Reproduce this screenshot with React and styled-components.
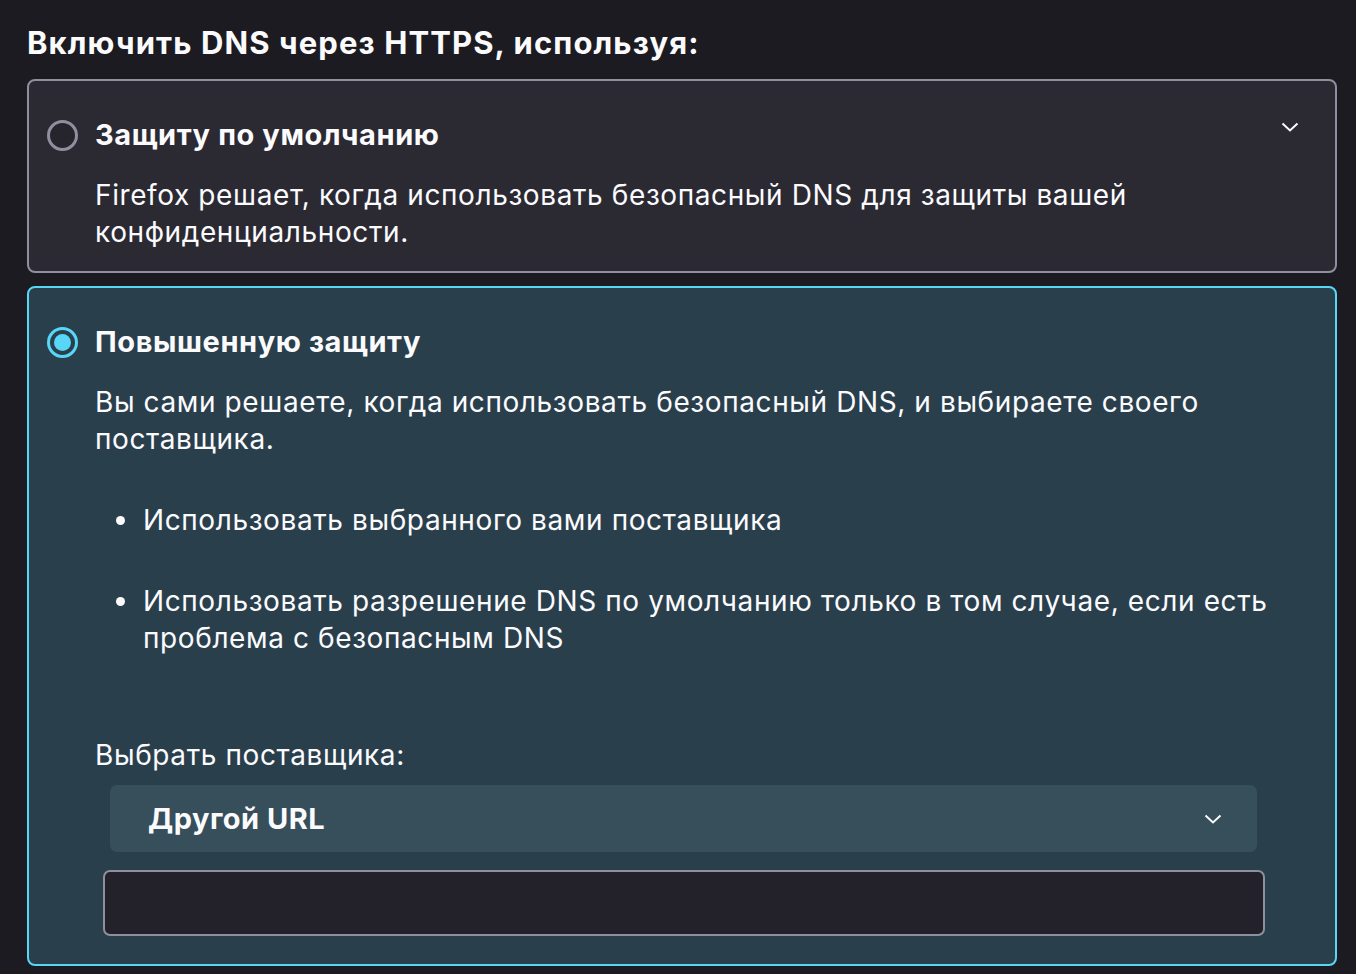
import React from "react";
import styled, { createGlobalStyle } from "styled-components";

const GlobalStyle = createGlobalStyle`
  html, body {
    margin: 0;
    padding: 0;
    background: #1c1b22;
  }
  body {
    font-family: Inter, "Noto Sans", sans-serif;
    color: #fbfbfe;
  }
`;

const Page = styled.div`
  padding: 22px 19px 10px 27px;
  display: flex;
  flex-direction: column;
`;

const Heading = styled.h2`
  margin: 0 0 15px;
  font-size: 31px;
  font-weight: 700;
  line-height: 42px;
  letter-spacing: 1.1px;
`;

const Card = styled.div`
  border: 2px solid ${(p) => (p.$active ? "#56d7f6" : "#8f8f9d")};
  background: ${(p) => (p.$active ? "#2a3f4c" : "#2b2a33")};
  border-radius: 8px;
  padding: ${(p) => (p.$active ? "36px 30px 28px 18px" : "36px 35px 20px 18px")};
  margin-bottom: ${(p) => (p.$active ? "0" : "13px")};
`;

const TitleRow = styled.div`
  display: flex;
  align-items: center;
  gap: 17px;
`;

const Radio = styled.span`
  width: 31px;
  height: 31px;
  box-sizing: border-box;
  border-radius: 50%;
  border: 3px solid ${(p) => (p.$checked ? "#57d6f7" : "#8f8f9d")};
  background: ${(p) => (p.$checked ? "transparent" : "#26252d")};
  display: flex;
  align-items: center;
  justify-content: center;
  flex-shrink: 0;
  &::after {
    content: "";
    display: ${(p) => (p.$checked ? "block" : "none")};
    width: 17px;
    height: 17px;
    border-radius: 50%;
    background: #57d6f7;
  }
`;

const Title = styled.div`
  font-size: 29px;
  font-weight: 700;
  flex: 1;
  line-height: 36px;
  letter-spacing: 0.6px;
`;

const Chevron = styled.svg`
  width: 20px;
  height: 20px;
  flex-shrink: 0;
  margin-top: ${(p) => p.$lift || 0}px;
`;

const Body = styled.div`
  padding-left: 48px;
  font-size: 28px;
  line-height: 37px;
  letter-spacing: 0.6px;
`;

const Desc = styled.p`
  margin: 24px 0 0;
`;

const List = styled.ul`
  margin: 44px 0 0;
  padding-left: 21px;
  list-style: none;
`;

const Item = styled.li`
  display: flex;
  margin-bottom: 44px;
  &::before {
    content: "";
    flex-shrink: 0;
    width: 9px;
    height: 9px;
    border-radius: 50%;
    background: #fbfbfe;
    margin: 14px 18px 0 0;
  }
`;

const Label = styled.div`
  margin-top: 80px;
`;

const Select = styled.div`
  margin: 11px 48px 0 15px;
  height: 67px;
  border-radius: 7px;
  background: #364f5b;
  display: flex;
  align-items: center;
  justify-content: space-between;
  padding: 0 34px 0 38px;
  font-size: 29px;
  font-weight: 700;
  letter-spacing: 0.5px;
`;

const UrlInput = styled.div`
  margin: 18px 40px 0 8px;
  height: 62px;
  border: 2px solid #8f8f9d;
  border-radius: 7px;
  background: #23222b;
`;

const ChevronIcon = ({ lift }) => (
  <Chevron viewBox="0 0 20 20" $lift={lift}>
    <path d="M2.5 6.5 L10 13.5 L17.5 6.5" fill="none" stroke="#fbfbfe" strokeWidth="2" />
  </Chevron>
);

export default function App() {
  return (
    <>
      <GlobalStyle />
      <Page>
        <Heading>Включить DNS через HTTPS, используя:</Heading>
        <Card>
          <TitleRow>
            <Radio />
            <Title>Защиту по умолчанию</Title>
            <ChevronIcon lift={-16} />
          </TitleRow>
          <Body>
            <Desc>
              Firefox решает, когда использовать безопасный DNS для защиты вашей
              конфиденциальности.
            </Desc>
          </Body>
        </Card>
        <Card $active>
          <TitleRow>
            <Radio $checked />
            <Title>Повышенную защиту</Title>
          </TitleRow>
          <Body>
            <Desc>
              Вы сами решаете, когда использовать безопасный DNS, и выбираете
              своего поставщика.
            </Desc>
            <List>
              <Item>Использовать выбранного вами поставщика</Item>
              <Item>
                Использовать разрешение DNS по умолчанию только в том случае,
                если есть проблема с безопасным DNS
              </Item>
            </List>
            <Label>Выбрать поставщика:</Label>
            <Select>
              <span>Другой URL</span>
              <ChevronIcon />
            </Select>
            <UrlInput />
          </Body>
        </Card>
      </Page>
    </>
  );
}
